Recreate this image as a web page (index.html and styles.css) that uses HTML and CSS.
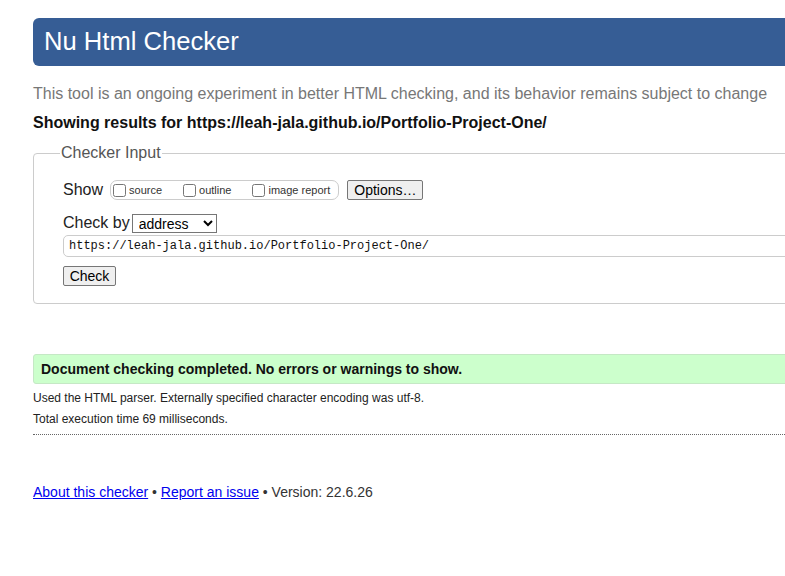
FILE: index.html
```html
<!DOCTYPE html>
<html>
<head>
<meta charset="utf-8">
<title>Nu Html Checker</title>
<link rel="stylesheet" href="styles.css">
</head>
<body>
<div class="page">
  <h1 class="header">Nu Html Checker</h1>
  <p class="intro">This tool is an ongoing experiment in better HTML checking, and its behavior remains subject to change</p>
  <p class="showing">Showing results for https://leah-jala.github.io/Portfolio-Project-One/</p>
  <fieldset class="checker">
    <legend class="legend">Checker Input</legend>
    <div class="row show-row">
      <span class="row-label">Show</span>
      <span class="opts">
        <label class="opt"><input type="checkbox">source</label>
        <label class="opt"><input type="checkbox">outline</label>
        <label class="opt"><input type="checkbox">image report</label>
      </span>
      <button class="btn btn-options">Options…</button>
    </div>
    <div class="row by-row">
      <span class="row-label">Check by</span>
      <select class="sel"><option>address</option></select>
    </div>
    <input class="url" type="text" value="https://leah-jala.github.io/Portfolio-Project-One/">
    <div class="row check-row">
      <button class="btn btn-check">Check</button>
    </div>
  </fieldset>
  <div class="success">Document checking completed. No errors or warnings to show.</div>
  <p class="details details-first">Used the HTML parser. Externally specified character encoding was utf-8.</p>
  <p class="details details-last">Total execution time 69 milliseconds.</p>
  <p class="footer"><a href="#">About this checker</a> • <a href="#">Report an issue</a> • Version: 22.6.26</p>
</div>
</body>
</html>
```

FILE: styles.css
```css
html, body {
  margin: 0;
  padding: 0;
  background: #fff;
  overflow: hidden;
}
body {
  font-family: "Liberation Sans", Arial, sans-serif;
  color: #222;
}
.page {
  padding-left: 33px;
  padding-top: 18px;
  width: 800px;
}
.header {
  margin: 0;
  height: 48px;
  line-height: 47px;
  background: #365d95;
  color: #fff;
  font-weight: normal;
  font-size: 25.6px;
  padding-left: 11px;
  border-radius: 6px 0 0 6px;
}
.intro {
  margin: 18px 0 0;
  font-size: 16px;
  line-height: 20px;
  color: #777;
}
.showing {
  margin: 9px 0 0;
  font-size: 16px;
  line-height: 20px;
  font-weight: bold;
  color: #111;
}
.checker {
  margin: 11px 0 0;
  border: 1px solid #ccc;
  border-radius: 4px;
  padding: 18px 0 17px 29px;
  display: flex;
  flex-direction: column;
}
.legend {
  font-size: 16px;
  color: #555;
  padding: 0 1px;
  margin-left: -3px;
}
.row {
  display: flex;
  align-items: center;
}
.row-label {
  font-size: 16px;
  color: #222;
}
.show-row {
  height: 20px;
}
.opts {
  display: flex;
  align-items: center;
  margin-left: 7px;
  height: 18px;
  border: 1px solid #ccc;
  border-radius: 7px;
  padding: 0 8px 0 2px;
}
.opt {
  display: flex;
  align-items: center;
  font-size: 11px;
  color: #333;
  margin-right: 21px;
}
.opt:last-child {
  margin-right: 0;
}
.opt input {
  margin: 0 3px 0 0;
  width: 13px;
  height: 13px;
}
.btn {
  font-family: "Liberation Sans", Arial, sans-serif;
  font-size: 14px;
  color: #000;
  background: #efefef;
  border: 1px solid #767676;
  border-radius: 2px;
  padding: 0 6px;
  height: 20px;
  line-height: 18px;
}
.btn-options {
  margin-left: 8px;
  width: 76px;
}
.by-row {
  margin-top: 13px;
  height: 20px;
}
.sel {
  margin-left: 2px;
  width: 85px;
  height: 19px;
  font-family: "Liberation Sans", Arial, sans-serif;
  font-size: 14px;
  border: 1px solid #767676;
  border-radius: 0;
  background: #fff;
  padding: 0 0 0 2px;
}
.url {
  margin-top: 2px;
  height: 22px;
  box-sizing: border-box;
  width: 760px;
  border: 1px solid #ccc;
  border-radius: 5px;
  padding: 0 5px;
  font-family: "Liberation Mono", "DejaVu Sans Mono", monospace;
  font-size: 12px;
  color: #111;
}
.check-row {
  margin-top: 9px;
}
.btn-check {
  width: 53px;
  padding: 0;
}
.success {
  margin-top: 50px;
  height: 30px;
  box-sizing: border-box;
  line-height: 28px;
  border: 1px solid #c5e8c5;
  border-radius: 3px 0 0 3px;
  background: #ccffcc;
  padding-left: 7px;
  font-size: 14px;
  font-weight: bold;
  color: #111;
}
.details {
  margin: 0;
  font-size: 12px;
  line-height: 21px;
  color: #222;
}
.details-first {
  margin-top: 4px;
}
.details-last {
  padding-bottom: 4px;
  border-bottom: 1px dotted #666;
}
.footer {
  margin: 48px 0 0;
  font-size: 14px;
  line-height: 18px;
  color: #333;
}
.footer a {
  color: #0000ee;
}
```
